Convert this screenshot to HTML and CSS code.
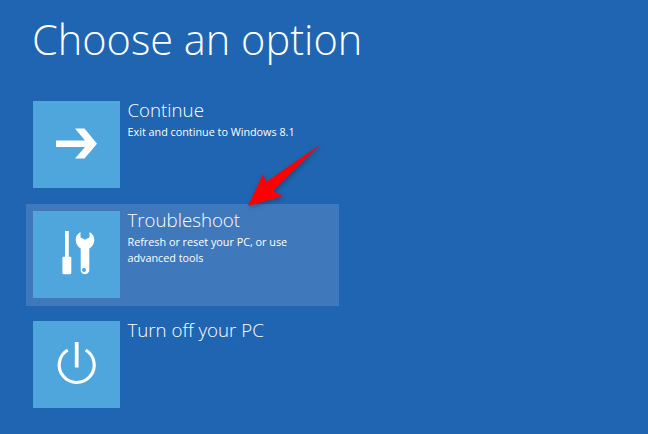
FILE: index.html
```html
<!DOCTYPE html>
<html lang="en">
<head>
<meta charset="utf-8">
<title>Choose an option</title>
<link rel="stylesheet" href="styles.css">
</head>
<body>
<main class="screen">
  <h1 class="title">Choose an option</h1>
  <ul class="options">
    <li class="option">
      <span class="tile">
        <svg width="87" height="87" viewBox="0 0 87 87"><path fill="#fff" d="M42 27.500h9.500L64 42.700 51.500 57.500H42l10-11.500H23v-6.500h29z"/></svg>
      </span>
      <div class="text">
        <h2 class="name">Continue</h2>
        <p class="desc">Exit and continue to Windows 8.1</p>
      </div>
    </li>
    <li class="option selected">
      <span class="tile">
        <svg width="87" height="87" viewBox="0 0 87 87"><path fill="#fff" d="M32 20h3.800v25.700H32zM30.500 45.700h6.800q1 0 1 1V62q0 1.300-1.300 1.300h-6.300q-1.300 0-1.300-1.300V46.700q0-1 1-1z"/><path fill="#fff" fill-rule="evenodd" d="M47.500 21v5.200l4.500 2.500 4.500-2.500V21c3 1.500 4.800 4.500 4.800 7.500 0 4-2 7.500-5 9V59a4.300 4.300 0 0 1-8.600 0V37.500c-3-1.500-5-5-5-9 0-3 1.800-6 4.800-7.500zM51 57a2 2 0 1 0 0 4 2 2 0 0 0 0-4z"/></svg>
      </span>
      <div class="text">
        <h2 class="name">Troubleshoot</h2>
        <p class="desc">Refresh or reset your PC, or use<br>advanced tools</p>
      </div>
    </li>
    <li class="option">
      <span class="tile">
        <svg width="87" height="87" viewBox="0 0 87 87"><path d="M34.700 29a17.500 17.500 0 1 0 18 0" fill="none" stroke="#fff" stroke-width="3.200"/><path d="M43.700 21v25.500" fill="none" stroke="#fff" stroke-width="3.800"/></svg>
      </span>
      <div class="text">
        <h2 class="name">Turn off your PC</h2>
      </div>
    </li>
  </ul>
  <svg class="pointer" width="90" height="80" viewBox="0 0 90 80"><path fill="#fe0000" d="M81 9 26 47 23 39 8 71 43 61 33 56Z"/></svg>
</main>
</body>
</html>
```

FILE: styles.css
```css
* {
  box-sizing: border-box;
}

html,
body {
  margin: 0;
  height: 100%;
}

.screen {
  position: relative;
  width: 648px;
  height: 434px;
  overflow: hidden;
  padding: 0 0 0 26px;
  background: #1f65b1;
  color: #fff;
  font-family: "Open Sans", "Noto Sans", sans-serif;
  font-weight: 300;
}

.title {
  margin: 0;
  height: 94px;
  padding: 9px 0 0 6px;
  font-size: 41.500px;
  font-weight: 300;
  line-height: 60px;
  letter-spacing: 0;
}

.options {
  display: flex;
  flex-direction: column;
  gap: 8px;
  margin: 0;
  padding: 0;
  list-style: none;
}

.option {
  display: flex;
  gap: 7.500px;
  width: 313px;
  height: 102px;
  padding: 7px;
}

.selected {
  background: #3f79bb;
}

.tile {
  flex: none;
  display: block;
  width: 87px;
  height: 87px;
  background: #4ea6dd;
}

.tile svg {
  display: block;
}

.text {
  margin-top: -4px;
}

.name {
  margin: 0;
  font-size: 18.700px;
  font-weight: 300;
  line-height: 26px;
}

.desc {
  margin: 1px 0 0;
  font-size: 10.800px;
  font-weight: 400;
  line-height: 16px;
}

.pointer {
  position: absolute;
  left: 240px;
  top: 135px;
  filter: drop-shadow(1px 2px 2px rgba(0, 0, 0, 0.25));
}
```
